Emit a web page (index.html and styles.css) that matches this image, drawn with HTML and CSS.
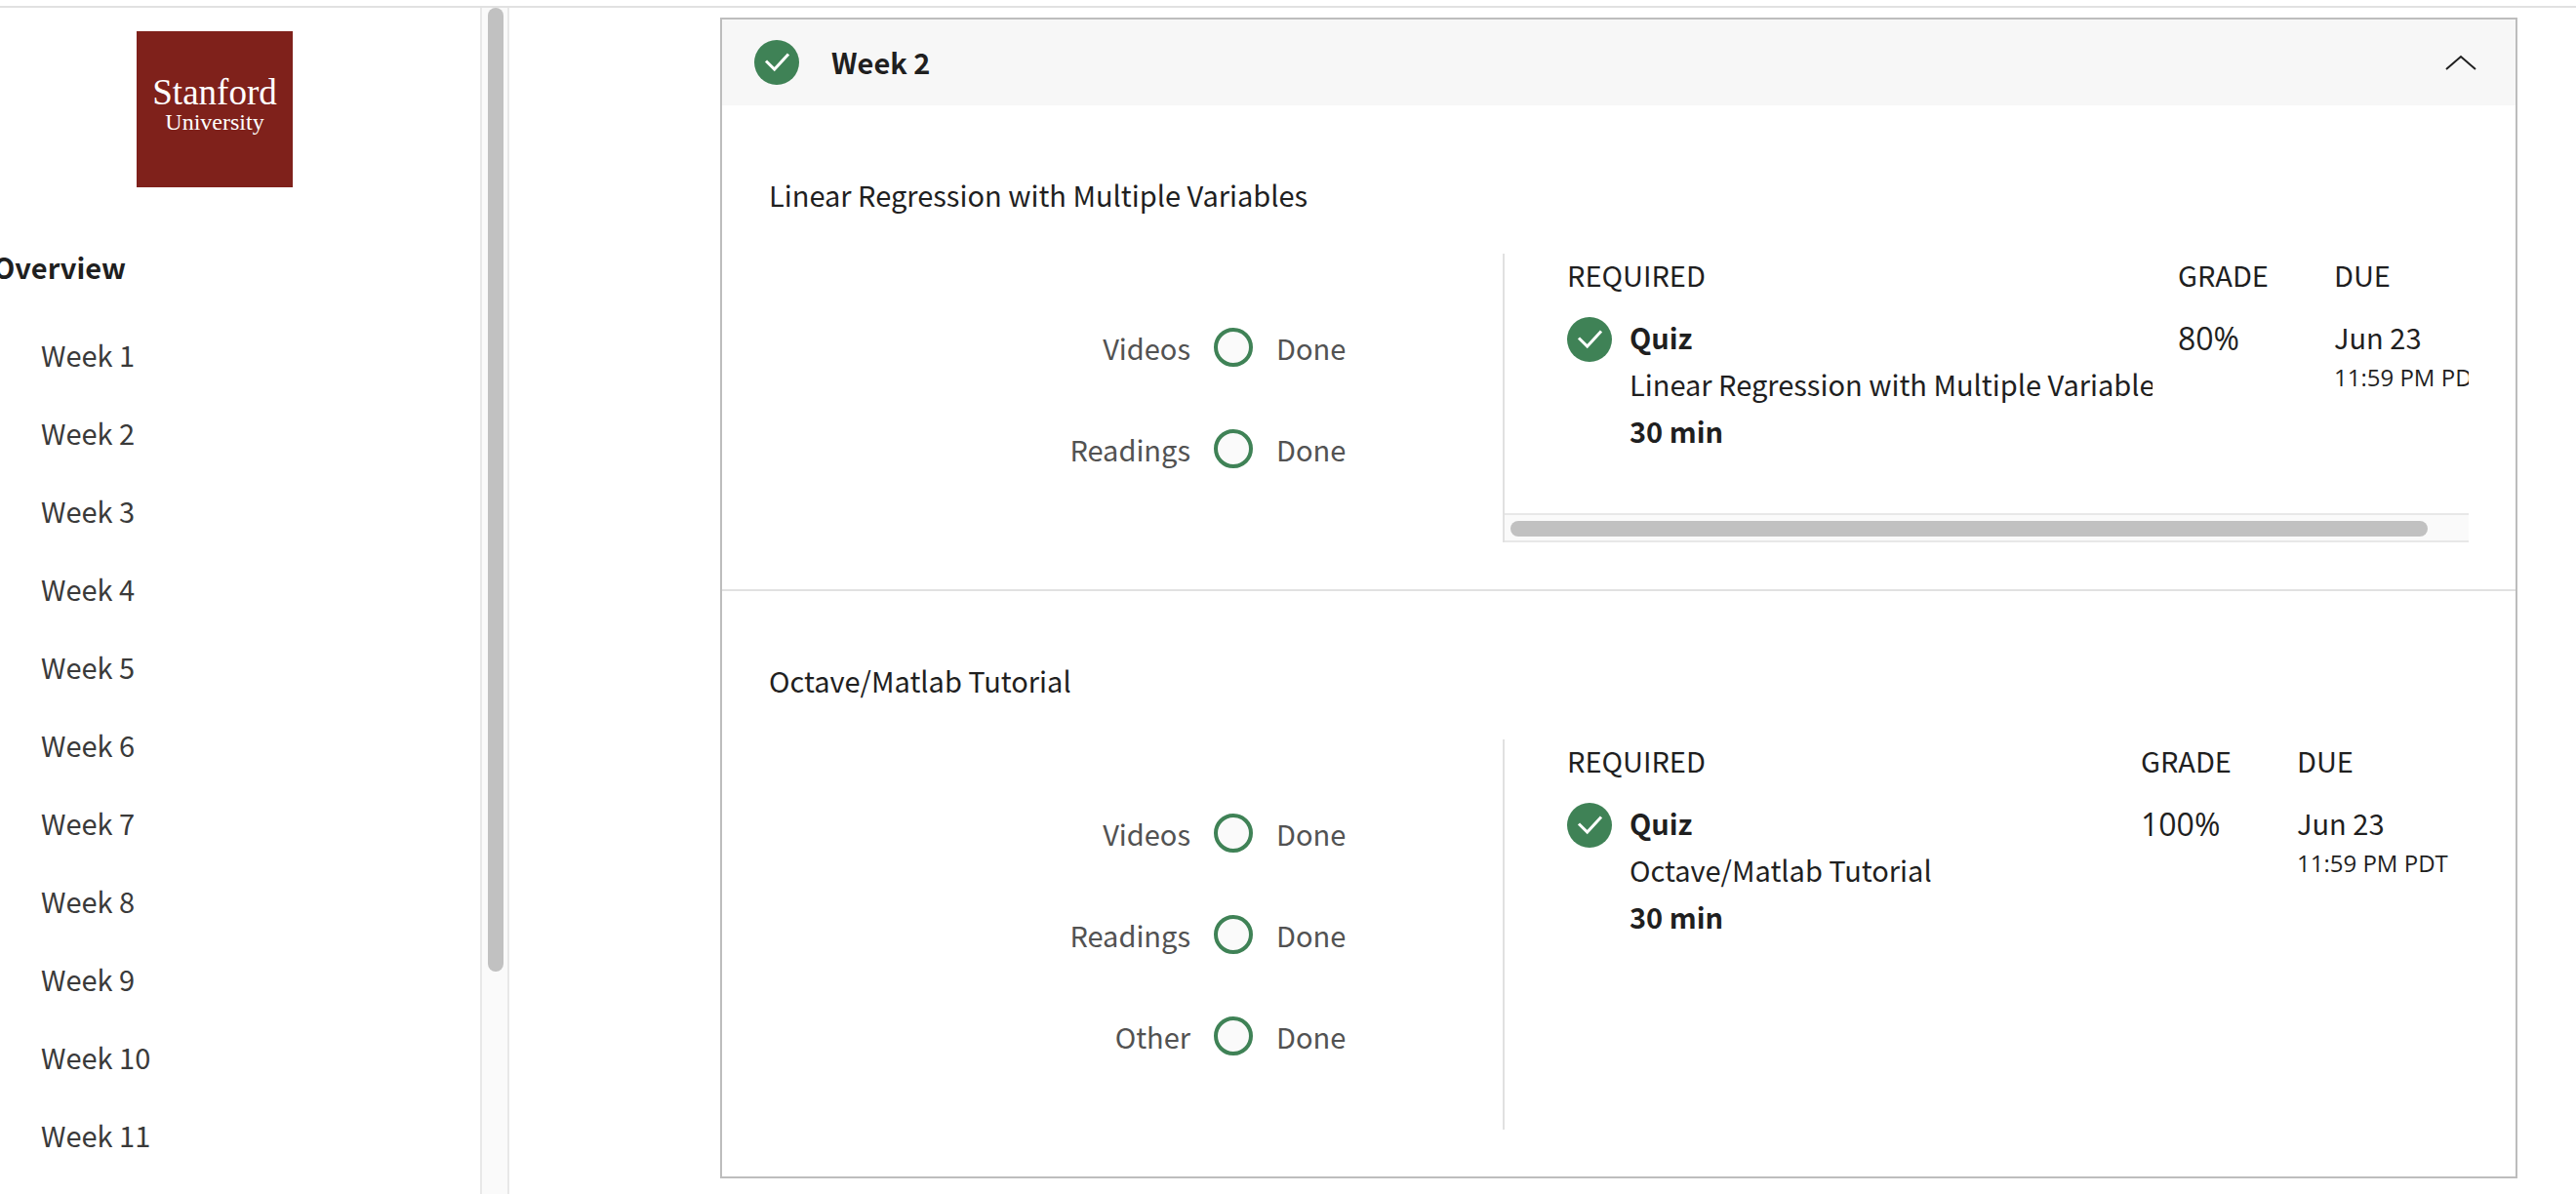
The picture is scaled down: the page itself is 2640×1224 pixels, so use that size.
FILE: index.html
```html
<!DOCTYPE html>
<html lang="en">
<head>
<meta charset="utf-8">
<title>Course Grades and Progress</title>
<link rel="stylesheet" href="styles.css">
</head>
<body>
<svg class="symbols" aria-hidden="true">
  <symbol id="check" viewBox="0 0 46 46">
    <circle cx="23" cy="23" r="23" fill="#3f8256"/>
    <path d="M12 21.500 L20.700 30 L35 14.500" fill="none" stroke="#fff" stroke-width="3"/>
  </symbol>
</svg>
<header class="topbar"></header>
<div class="page">
  <nav class="sidebar" aria-label="Course">
    <div class="logo"><span class="logo-main">Stanford</span><span class="logo-sub">University</span></div>
    <a class="overview" href="#overview">Overview</a>
    <ul class="weeks">
      <li><a href="#week1">Week 1</a></li>
      <li><a href="#week2">Week 2</a></li>
      <li><a href="#week3">Week 3</a></li>
      <li><a href="#week4">Week 4</a></li>
      <li><a href="#week5">Week 5</a></li>
      <li><a href="#week6">Week 6</a></li>
      <li><a href="#week7">Week 7</a></li>
      <li><a href="#week8">Week 8</a></li>
      <li><a href="#week9">Week 9</a></li>
      <li><a href="#week10">Week 10</a></li>
      <li><a href="#week11">Week 11</a></li>
    </ul>
  </nav>
  <div class="track-y"><div class="thumb-y"></div></div>
  <main class="content">
    <article class="card">
      <button class="card-head" type="button" aria-expanded="true">
        <svg class="check" aria-hidden="true"><use href="#check"/></svg>
        <span class="card-title">Week 2</span>
        <svg class="chevron" viewBox="0 0 32 16" aria-hidden="true"><path d="M1 15 L16 2 L31 15" fill="none" stroke="#1f1f1f" stroke-width="2"/></svg>
      </button>
      <section class="module">
        <h2>Linear Regression with Multiple Variables</h2>
        <div class="module-body">
          <ul class="progress">
            <li><span class="kind">Videos</span><span class="ring"></span><span>Done</span></li>
            <li><span class="kind">Readings</span><span class="ring"></span><span>Done</span></li>
          </ul>
          <div class="panel">
            <div class="viewport">
              <table class="items wide">
                <thead><tr><th class="name-col">REQUIRED</th><th class="grade-col">GRADE</th><th class="due-col">DUE</th></tr></thead>
                <tbody><tr>
                  <td><div class="item"><svg class="check" aria-hidden="true"><use href="#check"/></svg><div class="item-text"><strong>Quiz</strong><a href="#quiz1">Linear Regression with Multiple Variables</a><strong>30 min</strong></div></div></td>
                  <td class="grade">80%</td>
                  <td>Jun 23<div class="time">11:59 PM PDT</div></td>
                </tr></tbody>
              </table>
            </div>
            <div class="track-x"><div class="thumb-x"></div></div>
          </div>
        </div>
      </section>
      <section class="module">
        <h2>Octave/Matlab Tutorial</h2>
        <div class="module-body">
          <ul class="progress">
            <li><span class="kind">Videos</span><span class="ring"></span><span>Done</span></li>
            <li><span class="kind">Readings</span><span class="ring"></span><span>Done</span></li>
            <li><span class="kind">Other</span><span class="ring"></span><span>Done</span></li>
          </ul>
          <div class="panel">
            <div class="viewport">
              <table class="items">
                <thead><tr><th class="name-col">REQUIRED</th><th class="grade-col">GRADE</th><th class="due-col">DUE</th></tr></thead>
                <tbody><tr>
                  <td><div class="item"><svg class="check" aria-hidden="true"><use href="#check"/></svg><div class="item-text"><strong>Quiz</strong><a href="#quiz2">Octave/Matlab Tutorial</a><strong>30 min</strong></div></div></td>
                  <td class="grade">100%</td>
                  <td>Jun 23<div class="time">11:59 PM PDT</div></td>
                </tr></tbody>
              </table>
            </div>
          </div>
        </div>
      </section>
    </article>
  </main>
</div>
</body>
</html>
```
FILE: styles.css
```css
* { box-sizing: border-box; }
body {
  margin: 0;
  min-height: 100vh;
  display: flex;
  flex-direction: column;
  background: #fff;
  color: #1f1f1f;
  font: 29px/48px "Noto Sans CJK SC", "Noto Sans", sans-serif;
}
a { color: inherit; text-decoration: none; }
ul { list-style: none; margin: 0; padding: 0; }
.symbols { position: absolute; width: 0; height: 0; }
.topbar { height: 8px; border-bottom: 2px solid #e1e1e1; }
.page { display: flex; flex: 1; }

/* Sidebar */
.sidebar { width: 492px; flex: none; padding-top: 24px; overflow: hidden; }
.logo {
  width: 160px;
  height: 160px;
  margin: 0 0 41px 140px;
  padding-top: 43px;
  display: flex;
  flex-direction: column;
  align-items: center;
  background: #7f211b;
  color: #fff;
  font-family: "Liberation Serif", serif;
}
.logo-main { font-size: 37px; line-height: 40px; }
.logo-sub { font-size: 24px; line-height: 20px; }
.overview { display: block; margin: 0 0 10px -7px; line-height: 80px; font-weight: 700; }
.weeks a { display: block; padding-left: 42px; line-height: 80px; color: #3a3a3a; }

.track-y {
  width: 30px;
  flex: none;
  padding: 0 6px;
  background: #fafafa;
  border: solid #e8e8e8;
  border-width: 0 2px;
}
.thumb-y { width: 16px; height: 988px; border-radius: 8px; background: #c1c1c1; }

/* Week card */
.content { flex: 1; min-width: 0; padding: 10px 60px 16px 216px; }
.card { border: 2px solid #bdbdbd; }
.card-head {
  width: 100%;
  height: 88px;
  padding: 0 40px 0 33px;
  display: flex;
  align-items: center;
  border: 0;
  background: #f7f7f7;
  color: inherit;
  font: inherit;
  text-align: left;
}
.check { width: 46px; height: 46px; flex: none; }
.card-title { flex: 1; margin-left: 33px; font-weight: 600; line-height: 46px; padding-bottom: 2px; }
.chevron { width: 32px; height: 16px; }
.module { padding: 67px 48px 48px; }
.module + .module { border-top: 2px solid #e1e1e1; }
.module h2 { margin: 0 0 37px; font-size: 29px; font-weight: 400; }
.module-body { display: grid; grid-template-columns: 752fr 990fr; }

.progress { display: flex; flex-direction: column; gap: 64px; padding: 76px 0; color: #525252; }
.progress li {
  height: 40px;
  display: grid;
  grid-template-columns: 432px 40px auto;
  column-gap: 24px;
  align-items: center;
  line-height: 40px;
}
.kind { text-align: right; }
.ring { height: 40px; border: 4px solid #3f8256; border-radius: 50%; background: #fafafa; }

.panel { min-width: 0; display: flex; flex-direction: column; border-left: 2px solid #e1e1e1; }
.viewport { flex: 1; padding-left: 64px; overflow: hidden; }
.items { width: 100%; table-layout: fixed; border-collapse: collapse; }
.items.wide { width: calc(100% + 38px); }
.items th { padding: 0 0 19px; line-height: 42px; font-weight: 400; text-align: left; }
.items td { padding: 0; vertical-align: top; }
.grade-col { width: 160px; }
.due-col { width: 176px; }
.item { display: flex; align-items: flex-start; gap: 18px; padding-right: 26px; }
.item .check { margin-top: 4px; }
.item-text { min-width: 0; flex: 1; display: flex; flex-direction: column; overflow: hidden; white-space: nowrap; }
.item-text strong { font-weight: 600; }
.items .grade { font-family: "Open Sans", sans-serif; font-size: 32px; line-height: 52px; }
.time { font: 24px/36px "Open Sans", sans-serif; white-space: nowrap; }

.track-x {
  height: 30px;
  padding: 6px 42px 6px 6px;
  background: #fafafa;
  border: solid #e8e8e8;
  border-width: 2px 0;
}
.thumb-x { height: 16px; border-radius: 8px; background: #c1c1c1; }
```
